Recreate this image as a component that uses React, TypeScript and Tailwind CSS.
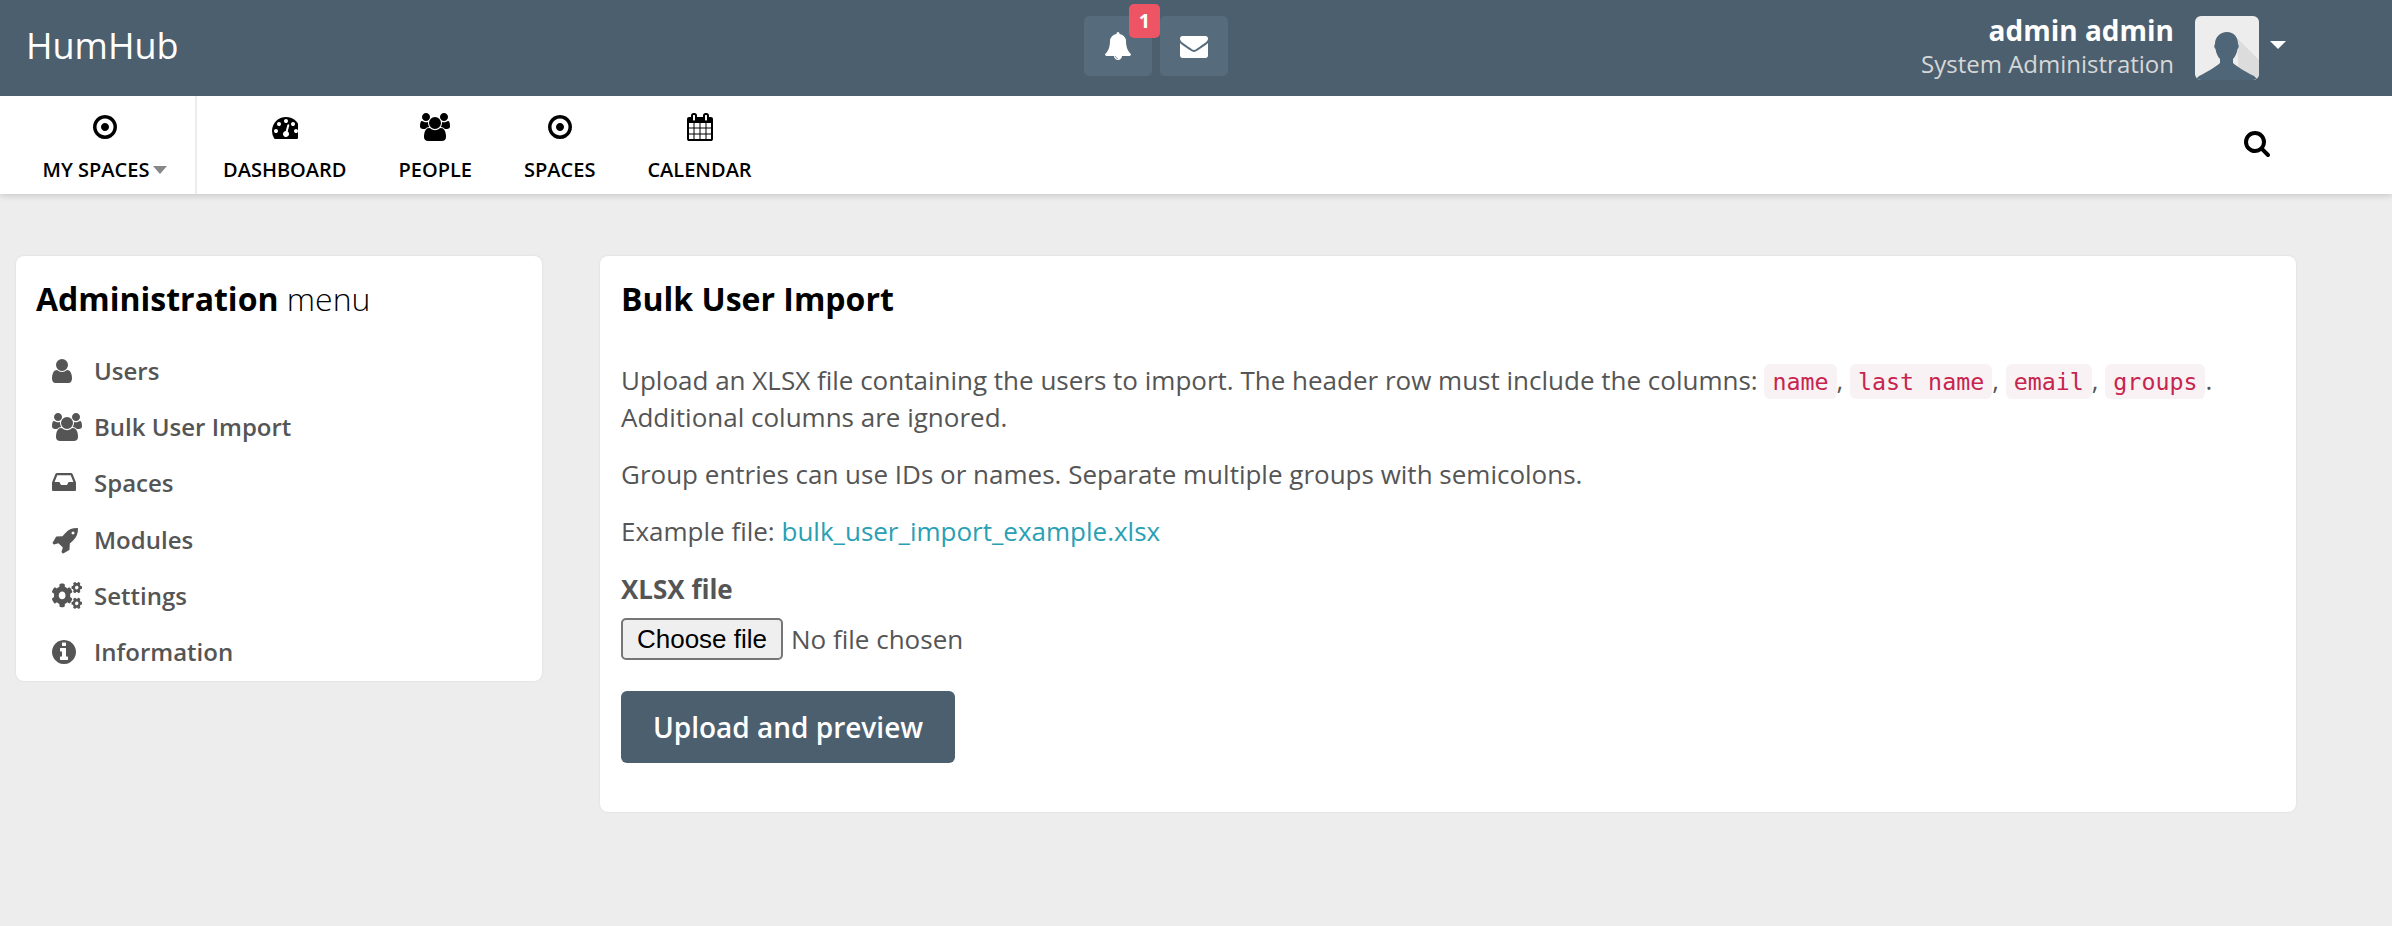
import React from 'react';
import { FaCogs } from 'react-icons/fa';

// Font Awesome 4 glyphs, 1792 units = 28px
const glyphs = {
  dot: { x: 0, w: 1536, d: 'M1024 896q0 106-75 181t-181 75-181-75-75-181 75-181 181-75 181 75 75 181zm-256-544q-148 0-273 73t-198 198-73 273 73 273 198 198 273 73 273-73 198-198 73-273-73-273-198-198-273-73zm768 544q0 209-103 385.5t-279.5 279.5-385.5 103-385.5-103-279.5-279.5-103-385.5 103-385.5 279.5-279.5 385.5-103 385.5 103 279.5 279.5 103 385.5z' },
  dashboard: { x: 0, w: 1664, d: 'M384 1152q0-53-37.500-90.500t-90.500-37.500-90.500 37.500-37.500 90.500 37.500 90.500 90.500 37.500 90.500-37.500 37.500-90.500zm192-448q0-53-37.500-90.500t-90.500-37.500-90.500 37.500-37.500 90.500 37.500 90.500 90.500 37.500 90.500-37.500 37.500-90.500zm428 481l101-382q6-26-7.500-48.500t-38.500-29.500-48 6.500-30 39.500l-101 382q-60 5-107 43.500t-63 98.500q-20 77 20 146t117 89 146-20 89-117q16-60-6-117t-72-91zm660-33q0-53-37.500-90.500t-90.500-37.500-90.500 37.500-37.500 90.500 37.500 90.500 90.500 37.500 90.500-37.500 37.500-90.500zm-640-640q0-53-37.500-90.500t-90.500-37.500-90.500 37.500-37.500 90.500 37.500 90.500 90.500 37.500 90.500-37.500 37.500-90.500zm448 192q0-53-37.500-90.500t-90.500-37.500-90.500 37.500-37.500 90.500 37.500 90.500 90.500 37.500 90.500-37.500 37.500-90.500zm320 448q0 261-141 483-19 29-54 29h-1402q-35 0-54-29-141-221-141-483 0-182 71-348t191-286 286-191 348-71 348 71 286 191 191 286 71 348z' },
  users: { x: 0, w: 1920, d: 'M593 896q-162 5-265 128h-134q-82 0-138-40.500t-56-118.500q0-353 124-353 6 0 43.500 21t97.500 42.500 119 21.500q67 0 133-23-5 37-5 66 0 139 81 256zm1071 637q0 120-73 189.500t-194 69.500h-874q-121 0-194-69.500t-73-189.500q0-53 3.500-103.500t14-109 26.500-108.500 43-97.500 62-81 85.500-53.500 111.500-20q10 0 43 21.500t73 48 107 48 135 21.500 135-21.500 107-48 73-48 43-21.500q61 0 111.500 20t85.500 53.500 62 81 43 97.500 26.500 108.500 14 109 3.500 103.500zm-1024-1277q0 106-75 181t-181 75-181-75-75-181 75-181 181-75 181 75 75 181zm704 384q0 159-112.500 271.500t-271.500 112.500-271.500-112.500-112.500-271.500 112.500-271.500 271.500-112.500 271.500 112.500 112.500 271.500zm576 225q0 78-56 118.500t-138 40.500h-134q-103-123-265-128 81-117 81-256 0-29-5-66 66 23 133 23 59 0 119-21.500t97.500-42.500 43.500-21q124 0 124 353zm-128-609q0 106-75 181t-181 75-181-75-75-181 75-181 181-75 181 75 75 181z' },
  calendar: { x: 0, w: 1664, d: 'M128 1664h288v-288h-288v288zm352 0h320v-288h-320v288zm-352-352h288v-320h-288v320zm352 0h320v-320h-320v320zm-352-384h288v-288h-288v288zm736 736h320v-288h-320v288zm-384-736h320v-288h-320v288zm768 736h288v-288h-288v288zm-384-352h320v-320h-320v320zm-352-864v-288q0-13-9.500-22.500t-22.500-9.500h-64q-13 0-22.500 9.500t-9.500 22.500v288q0 13 9.500 22.500t22.500 9.500h64q13 0 22.500-9.500t9.500-22.500zm736 864h288v-320h-288v320zm-384-384h320v-288h-320v288zm384 0h288v-288h-288v288zm32-480v-288q0-13-9.500-22.500t-22.500-9.500h-64q-13 0-22.500 9.500t-9.500 22.500v288q0 13 9.500 22.500t22.500 9.500h64q13 0 22.500-9.500t9.500-22.500zm384-64v1280q0 52-38 90t-90 38h-1408q-52 0-90-38t-38-90v-1280q0-52 38-90t90-38h128v-96q0-66 47-113t113-47h64q66 0 113 47t47 113v96h384v-96q0-66 47-113t113-47h64q66 0 113 47t47 113v96h128q52 0 90 38t38 90z' },
  user: { x: 256, w: 1280, d: 'M1536 1399q0 109-62.500 187t-150.500 78h-854q-88 0-150.500-78t-62.500-187q0-85 8.500-160.500t31.500-152 58.500-131 94-89 134.500-34.500q131 128 313 128t313-128q76 0 134.500 34.500t94 89 58.500 131 31.500 152 8.500 160.500zm-256-887q0 159-112.500 271.500t-271.500 112.500-271.500-112.500-112.500-271.500 112.500-271.500 271.500-112.500 271.500 112.500 112.500 271.500z' },
  rocket: { x: 64, w: 1664, d: 'M1504 448q0-40-28-68t-68-28-68 28-28 68 28 68 68 28 68-28 28-68zm224-288q0 249-75.500 430.500t-253.500 360.500q-81 80-195 176l-20 379q-2 16-16 26l-384 224q-7 4-16 4-12 0-23-9l-64-64q-13-14-8-32l85-276-281-281-276 85q-3 1-9 1-14 0-23-9l-64-64q-17-19-5-39l224-384q10-14 26-16l379-20q96-114 176-195 188-187 358-258t431-71q14 0 24 9.500t10 22.500z' },
  info: { x: 128, w: 1536, d: 'M1152 1376v-160q0-14-9-23t-23-9h-96v-512q0-14-9-23t-23-9h-320q-14 0-23 9t-9 23v160q0 14 9 23t23 9h96v320h-96q-14 0-23 9t-9 23v160q0 14 9 23t23 9h448q14 0 23-9t9-23zm-128-896v-160q0-14-9-23t-23-9h-192q-14 0-23 9t-9 23v160q0 14 9 23t23 9h192q14 0 23-9t9-23zm640 416q0 209-103 385.500t-279.500 279.500-385.500 103-385.500-103-279.500-279.500-103-385.500 103-385.500 279.500-279.500 385.500-103 385.500 103 279.500 279.500 103 385.500z' },
  bell: { x: 64, w: 1664, d: 'M912 1696q0-16-16-16-59 0-101.500-42.500t-42.500-101.500q0-16-16-16t-16 16q0 73 51.500 124.500t124.500 51.500q16 0 16-16zm816-288q0 52-38 90t-90 38h-448q0 106-75 181t-181 75-181-75-75-181h-448q-52 0-90-38t-38-90q50-42 91-88t85-119.500 74.500-158.500 50-206 19.500-260q0-152 117-282.500t307-158.500q-8-19-8-39 0-40 28-68t68-28 68 28 28 68q0 20-8 39 190 28 307 158.500t117 282.500q0 139 19.500 260t50 206 74.500 158.500 85 119.500 91 88z' },
  envelope: { x: 0, w: 1792, d: 'M1792 710v794q0 66-47 113t-113 47h-1472q-66 0-113-47t-47-113v-794q44 49 101 87 362 246 497 345 57 42 92.500 65.500t94.500 48 110 24.500h2q51 0 110-24.500t94.500-48 92.500-65.500q170-123 498-345 57-39 100-87zm0-294q0 79-49 151t-122 123q-376 261-468 325-10 7-42.500 30.500t-54 38-52 32.500-57.500 27-50 9h-2q-23 0-50-9t-57.500-27-52-32.500-54-38-42.500-30.500q-91-64-262-182.500t-205-142.500q-62-42-117-115.500t-55-136.500q0-78 41.500-130t118.500-52h1472q65 0 112.500 47t47.500 113z' },
  search: { x: 64, w: 1664, d: 'M1216 832q0-185-131.500-316.500t-316.500-131.500-316.500 131.500-131.500 316.500 131.500 316.500 316.500 131.500 316.500-131.500 131.500-316.500zm512 832q0 52-38 90t-90 38q-54 0-90-38l-343-342q-179 124-399 124-143 0-273.500-55.500t-225-150-150-225-55.500-273.500 55.500-273.500 150-225 225-150 273.500-55.500 273.500 55.500 225 150 150 225 55.500 273.500q0 220-124 399l343 343q37 37 37 90z' },
};

function Fa({ name }: { name: keyof typeof glyphs }) {
  const g = glyphs[name];
  return (
    <svg width={g.w / 64} height={28} viewBox={`${g.x} 0 ${g.w} 1792`} fill="currentColor" className="shrink-0">
      <path d={g.d} />
    </svg>
  );
}

function InboxIcon() {
  return (
    <svg width={24} height={28} viewBox="0 0 24 28" className="shrink-0">
      <path fill="currentColor" fillRule="evenodd" d="M5 4h14c.8 0 1.300.4 1.600 1L24 13.500V21a1 1 0 0 1-1 1H1a1 1 0 0 1-1-1v-7.500L3.400 5C3.700 4.400 4.200 4 5 4zM5.300 6.300 2.600 13h4.800l1.600 3h6l1.600-3h4.800l-2.700-6.700z" />
    </svg>
  );
}

function Avatar() {
  return (
    <svg viewBox="0 0 64 64" className="w-16 h-16 rounded-[6px] bg-[#ededed]">
      <path fill="#dcdcdc" d="M42 22 64 44V64H44z" />
      <path fill="#4f6678" d="M32 16c7 0 11 5 11 12 1 1 1 4-.5 5-.5 4-2.500 8-4.500 10v4c3 3 11 8 21 13l4 4H0l4-4c10-5 18-10 21-13v-4c-2-2-4-6-4.500-10C19 32 19 29 20 28c0-7 5-12 12-12z" />
    </svg>
  );
}

const navItems = [
  { label: 'DASHBOARD', icon: <Fa name="dashboard" /> },
  { label: 'PEOPLE', icon: <Fa name="users" /> },
  { label: 'SPACES', icon: <Fa name="dot" /> },
  { label: 'CALENDAR', icon: <Fa name="calendar" /> },
];

const menuItems = [
  { label: 'Users', icon: <Fa name="user" /> },
  { label: 'Bulk User Import', icon: <Fa name="users" /> },
  { label: 'Spaces', icon: <InboxIcon /> },
  { label: 'Modules', icon: <Fa name="rocket" /> },
  { label: 'Settings', icon: <FaCogs className="w-[30px] h-[27px]" preserveAspectRatio="none" /> },
  { label: 'Information', icon: <Fa name="info" /> },
];

function Code({ children }: { children: React.ReactNode }) {
  return (
    <code className="py-[4px] px-[8px] rounded-[6px] bg-[#f9f2f4] text-[#c7254e] font-['DejaVu_Sans_Mono',monospace] text-[23.300px] leading-none">
      {children}
    </code>
  );
}

export default function App() {
  return (
    <div className="min-h-[926px] bg-[#ededed] font-['Open_Sans',sans-serif] text-[26px] text-[#555]">
      {/* Top bar */}
      <header className="relative h-[96px] bg-[#4c5f6f] flex items-center justify-between pl-[26px] pr-[106px] text-white">
        <div className="text-[36px] font-normal leading-none mb-[5px]">HumHub</div>

        <div className="absolute left-[1084px] top-[16px] flex gap-[8px]">
          <button className="relative w-[68px] h-[60px] rounded-[5px] bg-[#566c7c] flex items-center justify-center">
            <Fa name="bell" />
            <span className="absolute left-[45px] top-[-12px] w-[31px] h-[34px] rounded-[5px] bg-[#ed5565] flex items-center justify-center text-[20px] font-bold">
              1
            </span>
          </button>
          <button className="w-[68px] h-[60px] rounded-[5px] bg-[#566c7c] flex items-center justify-center">
            <Fa name="envelope" />
          </button>
        </div>

        <div className="flex items-center">
          <div className="text-right mr-[21px]">
            <div className="text-[28px] font-bold leading-[32px] mt-[-2px] mb-[2px]">admin admin</div>
            <div className="text-[24px] leading-[32px] text-[#d7d7d7]">System Administration</div>
          </div>
          <Avatar />
          <span className="ml-[11px] mb-[6px] w-0 h-0 border-x-[8px] border-x-transparent border-t-[8px] border-t-white" />
        </div>
      </header>

      {/* Navigation */}
      <nav className="h-[98px] bg-white flex items-stretch justify-between pr-[122px] text-black shadow-[0_2px_6px_rgba(0,0,0,0.15)]">
        <div className="flex">
          <div className="w-[197px] pl-[15px] border-r-2 border-[#ededed] flex flex-col items-center pt-[17px]">
            <div className="h-[28px] flex items-center">
              <Fa name="dot" />
            </div>
            <div className="mt-[15px] flex items-center text-[20px] font-semibold leading-[28px]">
              MY SPACES
              <span className="ml-[4px] w-0 h-0 border-x-[7.500px] border-x-transparent border-t-[8px] border-t-[#888]" />
            </div>
          </div>
          <div className="flex pl-[26px] gap-[52px]">
            {navItems.map(item => (
              <div key={item.label} className="flex flex-col items-center pt-[17px]">
                <div className="h-[28px] flex items-center">{item.icon}</div>
                <div className="mt-[15px] text-[20px] font-semibold leading-[28px]">{item.label}</div>
              </div>
            ))}
          </div>
        </div>
        <div className="flex items-center pb-[4px]">
          <Fa name="search" />
        </div>
      </nav>

      {/* Content */}
      <main className="flex items-start gap-[58px] pl-[16px] pt-[62px]">
        <aside className="w-[526px] h-[425px] rounded-[8px] bg-white shadow-[0_0_3px_rgba(0,0,0,0.08)] pt-[25px]">
          <h2 className="pl-[20px] text-[32px] leading-[36px] text-black">
            <b className="font-bold">Administration</b> <span className="font-light">menu</span>
          </h2>
          <ul className="mt-[26px]">
            {menuItems.map(item => (
              <li key={item.label} className="h-[56.200px] flex items-center pl-[36px] text-[24px] font-semibold text-[#555]">
                <span className="w-[42px] flex items-center">{item.icon}</span>
                {item.label}
              </li>
            ))}
          </ul>
        </aside>

        <section className="w-[1696px] h-[556px] rounded-[8px] bg-white shadow-[0_0_3px_rgba(0,0,0,0.08)] pl-[21px] pt-[25px]">
          <h1 className="text-[32px] leading-[36px] font-bold text-black">Bulk User Import</h1>
          <p className="mt-[45px] leading-[36.500px]">
            Upload an XLSX file containing the users to import. The header row must include the columns: <Code>name</Code>, <Code>last name</Code>, <Code>email</Code>, <Code>groups</Code>.
            <br />
            Additional columns are ignored.
          </p>
          <p className="mt-[21px] leading-[36px]">Group entries can use IDs or names. Separate multiple groups with semicolons.</p>
          <p className="mt-[21px] leading-[36px]">
            Example file: <a className="text-[#2a9fb3]">bulk_user_import_example.xlsx</a>
          </p>
          <label className="block mt-[22px] font-bold leading-[36px]">XLSX file</label>
          <div className="mt-[11px] flex items-center h-[42px]">
            <button className="w-[162px] h-[42px] border-2 border-[#767676] rounded-[5px] bg-[#efefef] text-black text-[26px] font-['Liberation_Sans',sans-serif]">
              Choose file
            </button>
            <span className="ml-[8px]">No file chosen</span>
          </div>
          <button className="block mt-[31px] w-[334px] h-[72px] rounded-[6px] bg-[#4c5f6f] text-white text-[28px] font-semibold">
            Upload and preview
          </button>
        </section>
      </main>
    </div>
  );
}
